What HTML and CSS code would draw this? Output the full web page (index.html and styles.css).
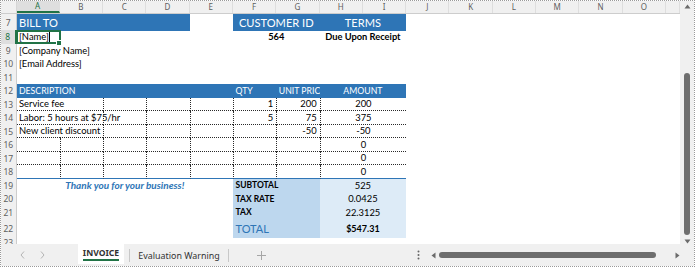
FILE: index.html
```html
<!DOCTYPE html>
<html>
<head>
<meta charset="utf-8">
<link rel="stylesheet" href="styles.css">
</head>
<body>
<div class="app">
  <div class="sheet">
    <div class="colhead">
      <div class="corner"></div>
      <div class="ch on">A</div><div class="ch">B</div><div class="ch">C</div><div class="ch">D</div><div class="ch">E</div><div class="ch">F</div><div class="ch">G</div><div class="ch">H</div><div class="ch">I</div><div class="ch">J</div><div class="ch">K</div><div class="ch">L</div><div class="ch">M</div><div class="ch">N</div><div class="ch">O</div><div class="ch"></div>
    </div>
    <div class="row r7">
      <div class="rh">7</div>
      <div class="c s4 hd big">BILL TO</div>
      <div class="c"></div>
      <div class="c s2 hd big ctr">CUSTOMER ID</div>
      <div class="c s2 hd big ctr">TERMS</div>
    </div>
    <div class="row">
      <div class="rh on">8</div>
      <div class="c sel">[Name]<span class="caret"></span></div>
      <div class="c"></div><div class="c"></div><div class="c"></div><div class="c"></div>
      <div class="c s2 b ctr">564</div>
      <div class="c s2 b ctr">Due Upon Receipt</div>
    </div>
    <div class="row"><div class="rh">9</div><div class="c">[Company Name]</div></div>
    <div class="row"><div class="rh">10</div><div class="c">[Email Address]</div></div>
    <div class="row"><div class="rh">11</div></div>
    <div class="row">
      <div class="rh">12</div>
      <div class="c s5 hd">DESCRIPTION</div>
      <div class="c hd">QTY</div>
      <div class="c hd">UNIT PRIC</div>
      <div class="c s2 hd ctr">AMOUNT</div>
    </div>
    <div class="row">
      <div class="rh">13</div>
      <div class="c it">Service fee</div>
      <div class="c it"></div>
      <div class="c it dl"></div>
      <div class="c it dl"></div>
      <div class="c it dl"></div>
      <div class="c it dl num">1</div>
      <div class="c it dl num">200</div>
      <div class="c it dl s2 ctr">200</div>
    </div>
    <div class="row">
      <div class="rh">14</div>
      <div class="c it">Labor: 5 hours at $75/hr</div>
      <div class="c it"></div>
      <div class="c it dl"></div>
      <div class="c it dl"></div>
      <div class="c it dl"></div>
      <div class="c it dl num">5</div>
      <div class="c it dl num">75</div>
      <div class="c it dl s2 ctr">375</div>
    </div>
    <div class="row">
      <div class="rh">15</div>
      <div class="c it">New client discount</div>
      <div class="c it"></div>
      <div class="c it dl"></div>
      <div class="c it dl"></div>
      <div class="c it dl"></div>
      <div class="c it dl num"></div>
      <div class="c it dl num">-50</div>
      <div class="c it dl s2 ctr">-50</div>
    </div>
    <div class="row">
      <div class="rh">16</div>
      <div class="c it"></div>
      <div class="c it dl"></div>
      <div class="c it dl"></div>
      <div class="c it dl"></div>
      <div class="c it dl"></div>
      <div class="c it dl num"></div>
      <div class="c it dl num"></div>
      <div class="c it dl s2 ctr">0</div>
    </div>
    <div class="row">
      <div class="rh">17</div>
      <div class="c it"></div>
      <div class="c it dl"></div>
      <div class="c it dl"></div>
      <div class="c it dl"></div>
      <div class="c it dl"></div>
      <div class="c it dl num"></div>
      <div class="c it dl num"></div>
      <div class="c it dl s2 ctr">0</div>
    </div>
    <div class="row r18">
      <div class="rh">18</div>
      <div class="c it"></div>
      <div class="c it dl"></div>
      <div class="c it dl"></div>
      <div class="c it dl"></div>
      <div class="c it dl"></div>
      <div class="c it dl num"></div>
      <div class="c it dl num"></div>
      <div class="c it dl s2 ctr">0</div>
    </div>
    <div class="row">
      <div class="rh">19</div>
      <div class="c s5 ctr thanks">Thank you for your business!</div>
      <div class="c s2 lbl">SUBTOTAL</div>
      <div class="c s2 val">525</div>
    </div>
    <div class="row">
      <div class="rh">20</div>
      <div class="c s5"></div>
      <div class="c s2 lbl">TAX RATE</div>
      <div class="c s2 val">0.0425</div>
    </div>
    <div class="row">
      <div class="rh">21</div>
      <div class="c s5"></div>
      <div class="c s2 lbl">TAX</div>
      <div class="c s2 val">22.3125</div>
    </div>
    <div class="row r22">
      <div class="rh">22</div>
      <div class="c s5"></div>
      <div class="c s2 lbl total">TOTAL</div>
      <div class="c s2 val b sum">$547.31</div>
    </div>
    <div class="row r23"><div class="rh">23</div></div>
  </div>

  <div class="vscroll">
    <svg class="varrow" width="7" height="5" viewBox="0 0 7 5"><path d="M0.5 4.5 L3.5 0.5 L6.5 4.5 Z" fill="#6b6b6b"/></svg>
    <div class="vthumb"></div>
    <svg class="varrow down" width="7" height="5" viewBox="0 0 7 5"><path d="M0.5 0.5 L3.5 4.5 L6.5 0.5 Z" fill="#6b6b6b"/></svg>
  </div>

  <div class="tabbar">
    <div class="nav">
      <svg width="5" height="8" viewBox="0 0 5 8"><path d="M4 0.5 L1 4 L4 7.5" fill="none" stroke="#b3b3b3" stroke-width="1"/></svg>
      <svg width="5" height="8" viewBox="0 0 5 8"><path d="M1 0.5 L4 4 L1 7.5" fill="none" stroke="#b3b3b3" stroke-width="1"/></svg>
    </div>
    <div class="tab active"><span>INVOICE</span></div>
    <div class="sep"></div>
    <div class="tab">Evaluation Warning</div>
    <div class="sep"></div>
    <div class="add"><svg width="9" height="9" viewBox="0 0 9 9"><path d="M4.5 0 V9 M0 4.5 H9" stroke="#a6a6a6" stroke-width="1"/></svg></div>
    <div class="spacer"></div>
    <div class="more"><svg width="3" height="10" viewBox="0 0 3 10"><circle cx="1.5" cy="1.5" r="1" fill="#666"/><circle cx="1.5" cy="5" r="1" fill="#666"/><circle cx="1.5" cy="8.5" r="1" fill="#666"/></svg></div>
    <div class="hscroll">
      <svg width="5" height="7" viewBox="0 0 5 7"><path d="M4.5 0.5 L0.5 3.5 L4.5 6.5 Z" fill="#6b6b6b"/></svg>
      <div class="hthumb"></div>
      <svg class="hright" width="5" height="7" viewBox="0 0 5 7"><path d="M0.5 0.5 L4.5 3.5 L0.5 6.5 Z" fill="#6b6b6b"/></svg>
    </div>
  </div>
</div>
</body>
</html>
```

FILE: styles.css
```css
* { box-sizing: border-box; margin: 0; padding: 0; }
html, body { width: 695px; height: 267px; overflow: hidden; background: #fff; }

.app {
  width: 695px;
  height: 267px;
  border: 1px dotted #9a9a9a;
  display: grid;
  grid-template-columns: 679px 14px;
  grid-template-rows: 243px 22px;
  font-family: "Lato", "Liberation Sans", sans-serif;
  color: #000;
}

.sheet { overflow: hidden; background: #fff; }

.row, .colhead {
  display: grid;
  grid-template-columns: 15.5px repeat(15, 43.3px) 14px;
}

.colhead {
  height: 12.5px;
  background: #f0f0f0;
  border-bottom: 1px solid #cdcdcd;
  font-family: "Noto Sans", "Open Sans", sans-serif;
}
.corner { border-right: 1px solid #d6d6d6; }
.ch {
  font-size: 8px;
  line-height: 11.5px;
  color: #606060;
  text-align: center;
  border-right: 1px solid #dedede;
}
.ch.on {
  background: #dedede;
  color: #217346;
  border-bottom: 2px solid #217346;
  line-height: 10px;
}

.row { height: 13.5px; }
.r7 { height: 16.5px; }
.r22 { height: 18px; }
.r23 { height: 7px; }

.rh {
  background: #f0f0f0;
  border-right: 1px solid #cdcdcd;
  font-family: "Noto Sans", "Open Sans", sans-serif;
  font-size: 8.5px;
  color: #606060;
  text-align: center;
  line-height: 13.5px;
}
.r7 .rh { line-height: 17px; }
.r22 .rh { line-height: 19px; }
.r23 .rh { line-height: 11px; }
.rh.on {
  background: #dedede;
  color: #217346;
  border-right: 2px solid #217346;
}

.c {
  font-size: 9.4px;
  padding: 0 2.5px;
  white-space: nowrap;
  display: flex;
  align-items: center;
  min-width: 0;
}
.s2 { grid-column: span 2; }
.s4 { grid-column: span 4; }
.s5 { grid-column: span 5; }

.ctr { justify-content: center; }
.num { justify-content: flex-end; padding-right: 3px; }
.b { font-weight: 700; font-size: 9.3px; }
.b.sum { font-size: 9px; }

.hd { background: #2e75b6; color: #fff; font-size: 8.7px; }
.hd.big { font-size: 11.1px; }

.sel { position: relative; }
.sel::after {
  content: "";
  position: absolute;
  left: -0.5px; top: -0.5px; right: -1px; bottom: -0.5px;
  border: 2px solid #217346;
}
.sel::before {
  content: "";
  position: absolute;
  right: -2.5px; bottom: -2px;
  width: 4px; height: 4px;
  background: #217346;
  border: 1px solid #fff;
  z-index: 1;
}
.caret {
  display: inline-block;
  width: 1px;
  height: 10px;
  background: #000;
  margin-left: 0.5px;
}

.it { border-bottom: 1px dotted #2a2a2a; }
.dl { border-left: 1px dotted #2a2a2a; }
.r18 .c { border-bottom: 1px solid #2e75b6; }

.thanks {
  color: #2e75b6;
  font-weight: 700;
  font-style: italic;
  font-size: 10px;
}
.lbl {
  background: #bdd7ee;
  font-weight: 700;
  font-size: 8.5px;
}
.val {
  background: #ddebf7;
  justify-content: center;
}
.total {
  font-weight: 400;
  font-size: 11px;
  color: #2e75b6;
}

.vscroll {
  background: #f0f0f0;
  display: flex;
  flex-direction: column;
  align-items: center;
  padding-top: 3px;
}
.vthumb {
  margin-top: 64px;
  width: 5.5px;
  height: 162px;
  border-radius: 3px;
  background: #6e6e6e;
}
.varrow.down { margin-top: 4px; }

.tabbar {
  grid-column: 1 / -1;
  background: #f0f0f0;
  display: flex;
  align-items: center;
  font-family: "Noto Sans", "Open Sans", sans-serif;
  font-size: 8.9px;
  color: #333;
}
.nav {
  width: 77px;
  display: flex;
  align-items: center;
  gap: 15px;
  padding-left: 19px;
}
.tab {
  width: 98px;
  text-align: center;
  white-space: nowrap;
}
.tab.active {
  width: 46px;
  height: 20px;
  align-self: flex-start;
  background: #fff;
  font-weight: 700;
  font-size: 8.6px;
  display: flex;
  justify-content: center;
  padding-top: 4px;
}
.tab.active span {
  border-bottom: 2px solid #217346;
  height: 13px;
  line-height: 11px;
}
.sep {
  width: 1px;
  height: 13px;
  background: #c8c8c8;
}
.tab.active + .sep { margin-left: 5px; }
.add {
  width: 64px;
  display: flex;
  justify-content: center;
}
.add svg { display: block; }
.spacer { flex: 1; }
.more {
  width: 10px;
  display: flex;
  justify-content: center;
}
.more svg { display: block; }
.hscroll {
  width: 271px;
  display: flex;
  align-items: center;
  padding-left: 8px;
}
.hscroll svg { display: block; }
.hthumb {
  margin-left: 3px;
  width: 217px;
  height: 5.5px;
  border-radius: 3px;
  background: #6e6e6e;
}
.hright { margin-left: 19px; }
```
